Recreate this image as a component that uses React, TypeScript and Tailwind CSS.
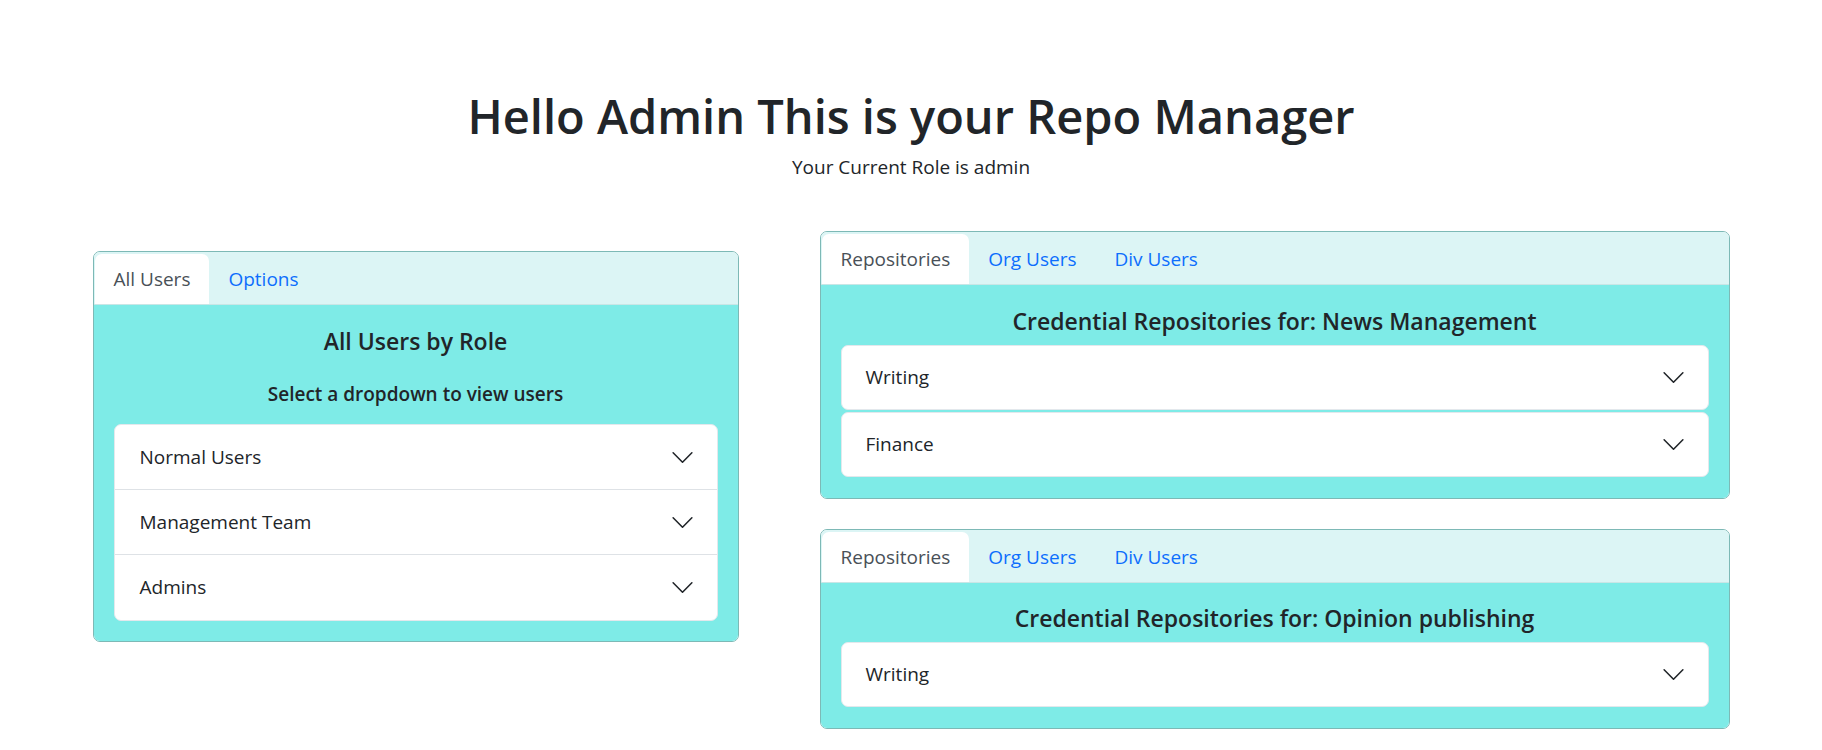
import React from "react";

const font = { fontFamily: '"Open Sans", "Noto Sans", sans-serif' };

const Chevron = () => (
  <svg width="25" height="25" viewBox="0 0 16 16" fill="none" stroke="#212529" strokeWidth="1" strokeLinecap="round" strokeLinejoin="round">
    <path d="M2 5L8 11L14 5" />
  </svg>
);

const Tabs = ({ tabs }: { tabs: string[] }) => (
  <div className="flex bg-[#dcf5f5] pt-[2px] pl-[1px] border-b border-[#c9e6e6]">
    {tabs.map((t, i) => (
      <div
        key={t}
        className={
          i === 0
            ? "px-[19px] py-[10px] text-[19px] leading-[30px] bg-white text-[#495057] rounded-t-[7px]"
            : "px-[19px] py-[10px] text-[19px] leading-[30px] text-[#0d6efd]"
        }
      >
        {t}
      </div>
    ))}
  </div>
);

const RepoCard = ({ title, items, pt }: { title: string; items: string[]; pt: string }) => (
  <div className="rounded-[7px] border border-[#7db9b6] overflow-hidden">
    <Tabs tabs={["Repositories", "Org Users", "Div Users"]} />
    <div className={`bg-[#7eebe7] px-[20px] pb-[21px] ${pt}`}>
      <h5 className="text-center text-[23px] leading-[30px] font-semibold text-[#212529] mb-[9px]">{title}</h5>
      <div className="flex flex-col gap-[2px]">
        {items.map((it) => (
          <div key={it} className="h-[65px] bg-white rounded-[7px] border border-[#e3e8ec] flex items-center justify-between pl-[24px] pr-[22px]">
            <span className="text-[19px] text-[#212529]">{it}</span>
            <Chevron />
          </div>
        ))}
      </div>
    </div>
  </div>
);

export default function App() {
  return (
    <div className="min-h-screen bg-white" style={font}>
      <div className="pt-[86px] text-center text-[#212529]">
        <h1 className="text-[47px] leading-[60px] font-semibold mb-[6px]">Hello Admin This is your Repo Manager</h1>
        <p className="text-[19px] leading-[30px]">Your Current Role is admin</p>
      </div>
      <div className="flex justify-center gap-[81px] mt-[49px]">
        <div className="w-[646px] mt-[20px] self-start rounded-[7px] border border-[#7db9b6] overflow-hidden">
          <Tabs tabs={["All Users", "Options"]} />
          <div className="bg-[#7eebe7] px-[20px] pt-[21px] pb-[20px]">
            <h5 className="text-center text-[23px] leading-[30px] font-semibold text-[#212529] mb-[23px]">All Users by Role</h5>
            <p className="text-center text-[19px] leading-[30px] font-semibold text-[#212529] mb-[15px]">Select a dropdown to view users</p>
            <div className="bg-white rounded-[7px] border border-[#e3e8ec]">
              {["Normal Users", "Management Team", "Admins"].map((it, i) => (
                <div
                  key={it}
                  className={`h-[65px] flex items-center justify-between pl-[25px] pr-[22px] ${i < 2 ? "border-b border-[#dee2e6]" : ""}`}
                >
                  <span className="text-[19px] text-[#212529]">{it}</span>
                  <Chevron />
                </div>
              ))}
            </div>
          </div>
        </div>
        <div className="w-[910px] flex flex-col gap-[30px]">
          <RepoCard title="Credential Repositories for: News Management" items={["Writing", "Finance"]} pt="pt-[21px]" />
          <RepoCard title="Credential Repositories for: Opinion publishing" items={["Writing"]} pt="pt-[20px]" />
        </div>
      </div>
    </div>
  );
}
